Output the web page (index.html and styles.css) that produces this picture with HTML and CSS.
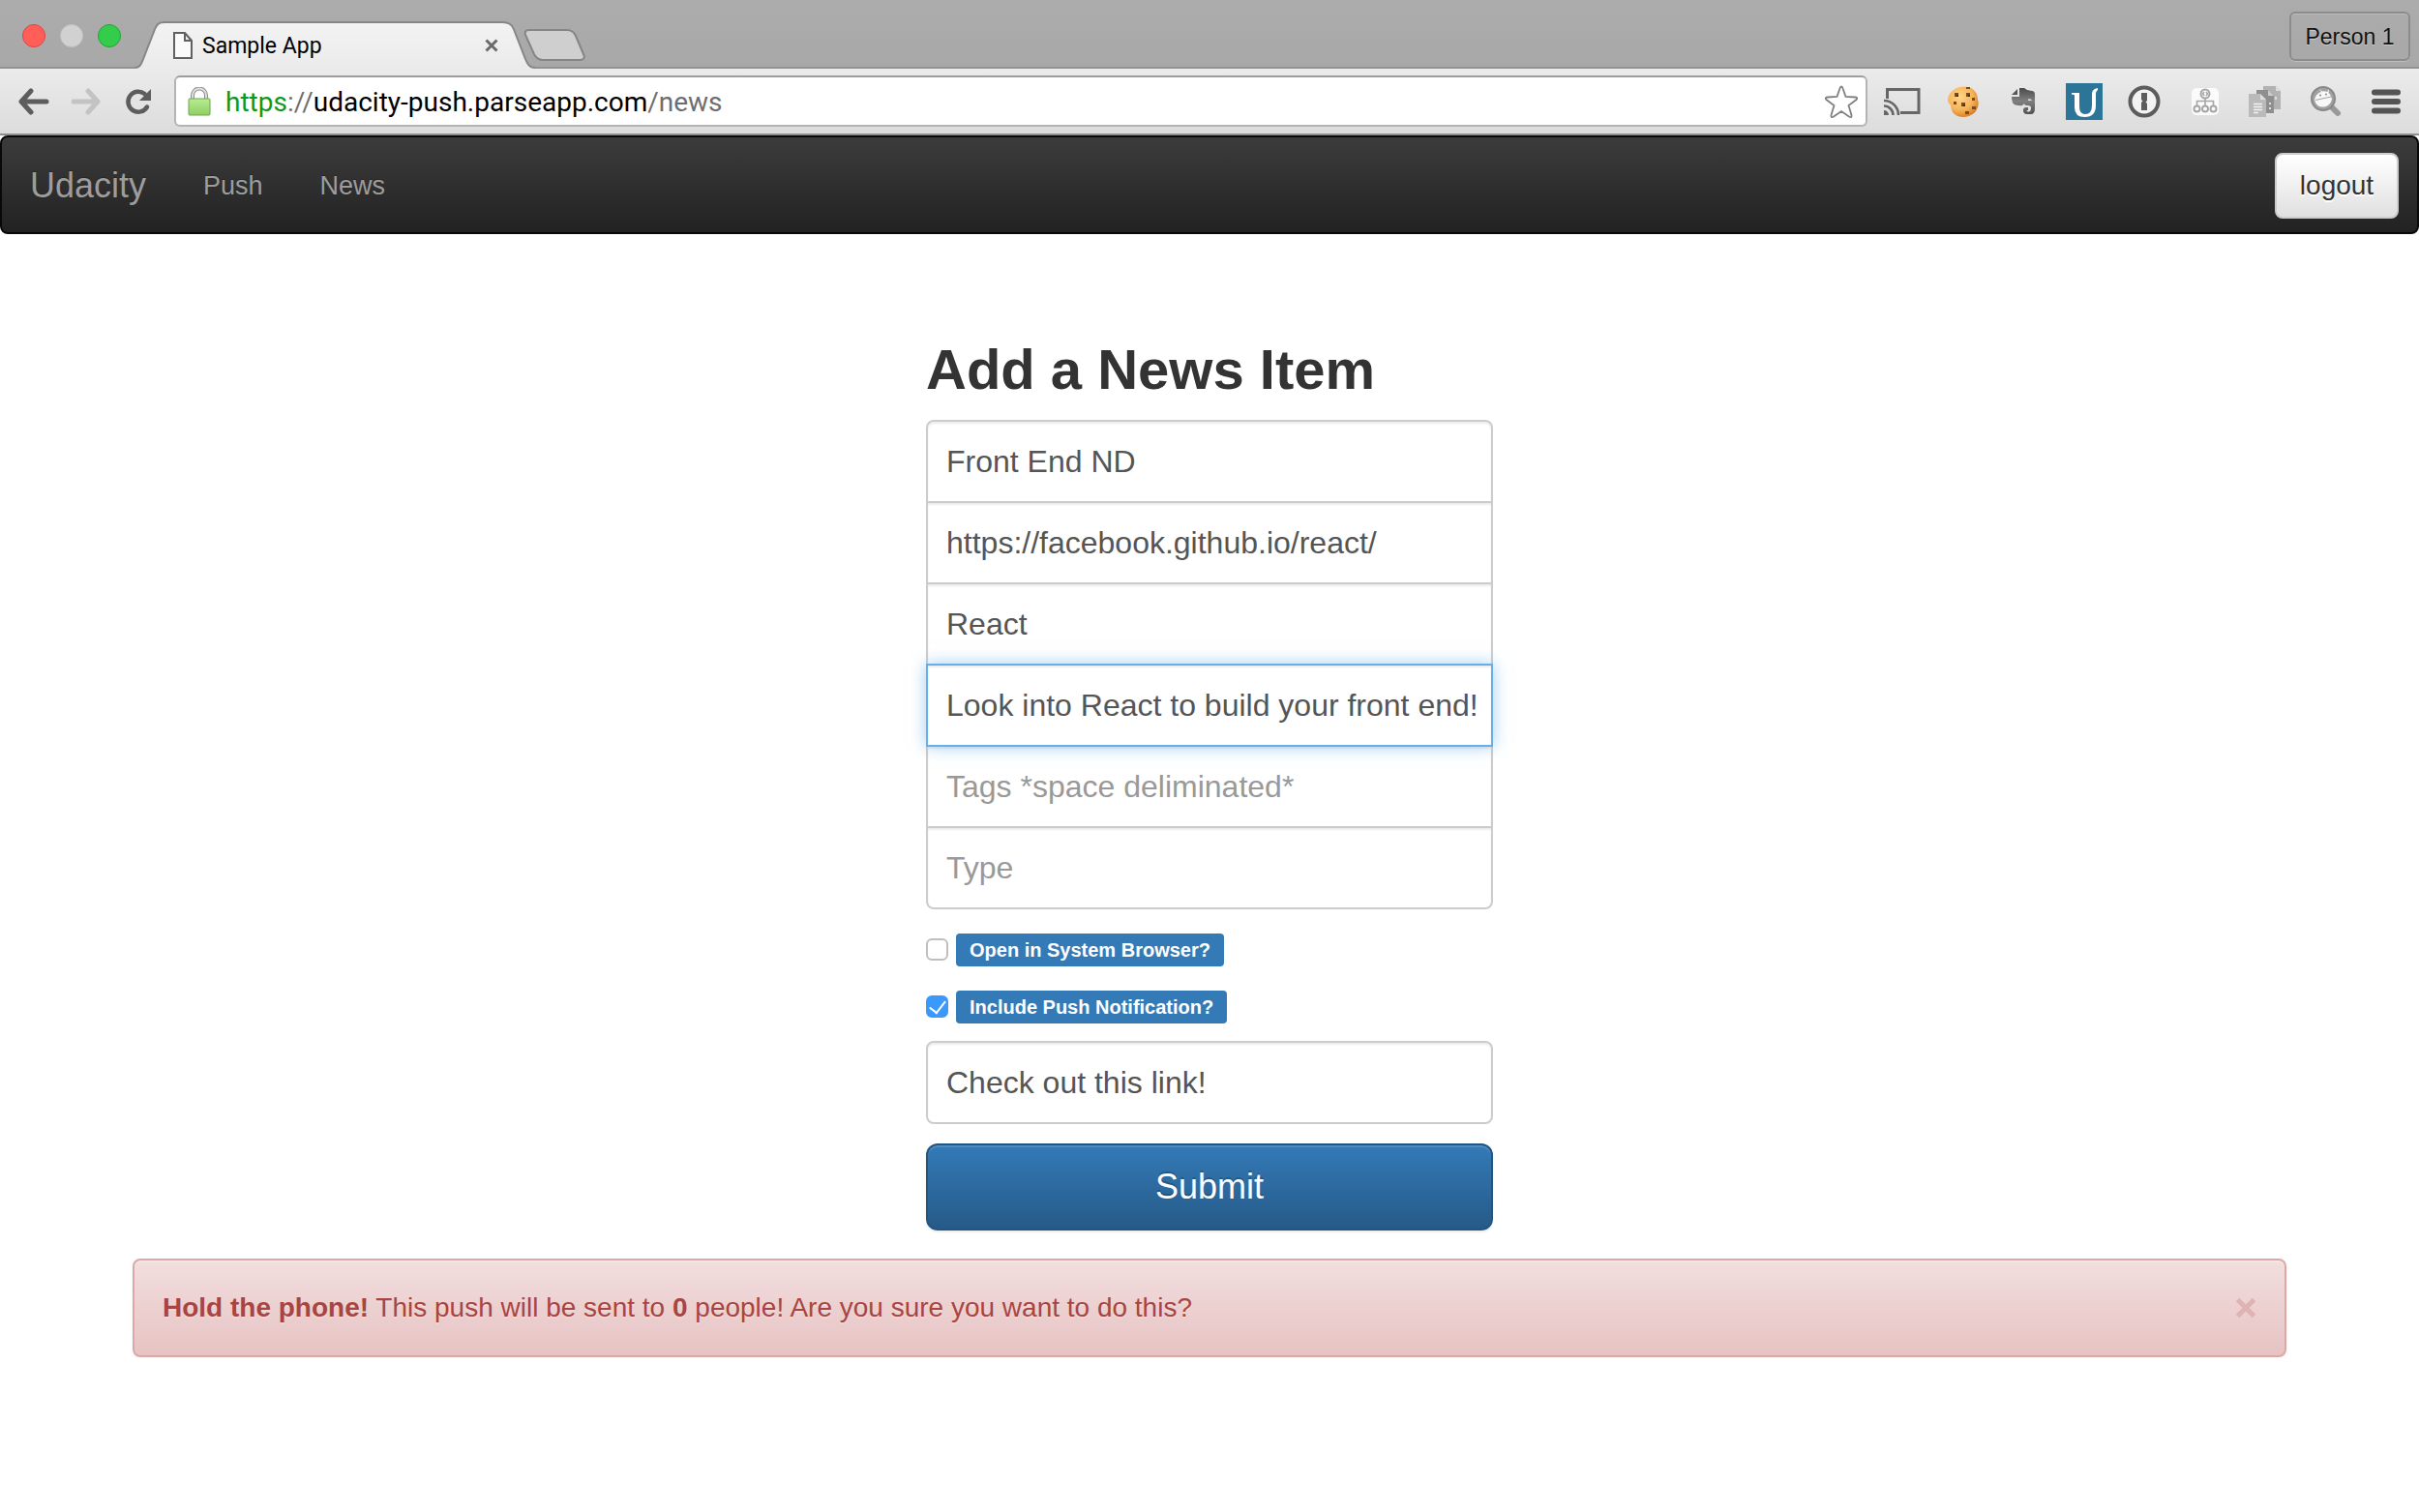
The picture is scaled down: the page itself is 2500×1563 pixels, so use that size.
FILE: index.html
```html
<!DOCTYPE html>
<html lang="en">
<head>
<meta charset="utf-8">
<title>Sample App</title>
<link rel="stylesheet" href="styles.css">
</head>
<body>
<header class="browser">
  <div class="tabstrip">
    <div class="lights">
      <span class="light light-close"></span>
      <span class="light light-min"></span>
      <span class="light light-max"></span>
    </div>
    <div class="tab">
      <svg class="tab-shape" viewBox="0 0 412 49" preserveAspectRatio="none" aria-hidden="true">
        <defs><linearGradient id="tabfill" x1="0" y1="0" x2="0" y2="1"><stop offset="0" stop-color="#f3f3f3"/><stop offset="1" stop-color="#ebebeb"/></linearGradient></defs>
        <path d="M0 48 C6 48 7 44 9 39 L21 8 C23 3 25 1 31 1 H379 C385 1 388 3 390 8 L402 39 C404 44 406 48 412 48 V49 H0Z" fill="url(#tabfill)"/>
        <path d="M0 48 C6 48 7 44 9 39 L21 8 C23 3 25 1 31 1 H379 C385 1 388 3 390 8 L402 39 C404 44 406 48 412 48" fill="none" stroke="#868686" stroke-width="2"/>
      </svg>
      <svg class="tab-file" viewBox="0 0 20 28" aria-hidden="true"><path d="M1 1H12L19 9V27H1Z M12 1V9H19" fill="#fafafa" stroke="#616161" stroke-width="2"/></svg>
      <span class="tab-title">Sample App</span>
      <button class="tab-close" aria-label="Close tab"><svg viewBox="0 0 14 14"><path d="M1.500 1.500L12.500 12.500M12.500 1.500L1.500 12.500" stroke="#6b6b6b" stroke-width="3"/></svg></button>
    </div>
    <button class="newtab" aria-label="New tab"><svg viewBox="0 0 64 33"><path d="M6 1H45C50 1 52 3 54 7L62 26C64 30 62 32 58 32H20C15 32 13 30 11 26L2 6C1 3 2 1 6 1Z" fill="#cfcfcf" stroke="#858585" stroke-width="2"/></svg></button>
    <button class="person">Person 1</button>
  </div>
  <div class="toolbar">
    <div class="history">
      <button class="icon" aria-label="Back"><svg width="32" height="28" viewBox="0 0 32 28"><path d="M29 14H4M13 3L3 14L13 25" fill="none" stroke="#5d5d5d" stroke-width="5" stroke-linecap="round" stroke-linejoin="round"/></svg></button>
      <button class="icon" aria-label="Forward"><svg width="32" height="28" viewBox="0 0 32 28"><path d="M2 14H27M17 3L27 14L17 25" fill="none" stroke="#c3c3c3" stroke-width="5" stroke-linecap="round" stroke-linejoin="round"/></svg></button>
      <button class="icon" aria-label="Reload"><svg width="28" height="28" viewBox="0 0 28 28"><path d="M23 19.500A10.500 10.500 0 1 1 20.500 6" fill="none" stroke="#5d5d5d" stroke-width="4.500" stroke-linecap="round"/><path d="M27 1V13H15Z" fill="#5d5d5d"/></svg></button>
    </div>
    <div class="omnibox">
      <svg width="24" height="30" viewBox="0 0 24 30" aria-hidden="true">
        <defs><linearGradient id="lock" x1="0" y1="0" x2="0" y2="1"><stop offset="0" stop-color="#b9ec92"/><stop offset="1" stop-color="#8fce66"/></linearGradient></defs>
        <path d="M5 13V8.500A7 7 0 0 1 19 8.500V13" fill="none" stroke="#8c8c8c" stroke-width="4"/><path d="M5 13V8.500A7 7 0 0 1 19 8.500V13" fill="none" stroke="#dedede" stroke-width="2"/>
        <rect x="1" y="12" width="22" height="17" rx="1" fill="url(#lock)" stroke="#6fa84d"/>
      </svg>
      <div class="url" role="textbox" contenteditable="true" spellcheck="false" aria-label="Address"><span class="url-scheme">https</span><span class="url-dim">://</span>udacity-push.parseapp.com<span class="url-dim">/news</span></div>
      <button class="icon" aria-label="Bookmark"><svg width="36" height="36" viewBox="0 0 36 36"><path d="M18 2.500Q19 2.500 19.600 4.500L22.500 13L32.500 13.500Q35.500 14 33.500 16L25.500 22L28.500 32Q29 35 26.300 33.700L18 28L9.700 33.700Q7 35 7.500 32L10.500 22L2.500 16Q.5 14 3.500 13.500L13.500 13L16.400 4.500Q17 2.500 18 2.500Z" fill="#fff" stroke="#808080" stroke-width="1.800"/></svg></button>
    </div>
    <div class="extensions">
      <button class="icon" aria-label="Cast"><svg width="38" height="30" viewBox="0 0 38 30"><path d="M3.500 12V2.500H36V26.500H17" fill="none" stroke="#666" stroke-width="3"/><path d="M0 24A5 5 0 0 1 5 29H0Z" fill="#666"/><path d="M0 19.500A9.500 9.500 0 0 1 9.500 29M0 14A15 15 0 0 1 15 29" fill="none" stroke="#666" stroke-width="2.600"/></svg></button>
      <button class="icon" aria-label="Cookies"><svg width="38" height="34" viewBox="0 0 38 34">
        <defs><radialGradient id="cookie" cx=".4" cy=".35" r=".7"><stop offset="0" stop-color="#ffd587"/><stop offset=".6" stop-color="#f6b45a"/><stop offset="1" stop-color="#d9791f"/></radialGradient></defs>
        <path d="M12 3Q19 0 27 3Q34 7 34 15Q36 21 32 27Q27 33 19 33Q12 33 8 28Q6 24 6 21Q1 17 4 11Q6 6 12 3Z" fill="url(#cookie)"/>
        <path d="M10 8h4v4h-4zM22 8h4v4h-4zM17 18h4v4h-4zM28 13h3v3h-3zM28 22h4v3h-4zM9 17h3v3h-3zM22 2h4v2h-4zM21 27h4v3h-4z" fill="#7a4a1f"/><path d="M12 10h2v2h-2zM24 10h2v2h-2zM19 20h2v2h-2z" fill="#4e2c12"/></svg></button>
      <button class="icon" aria-label="Notes"><svg width="38" height="30" viewBox="0 0 38 30">
        <defs><linearGradient id="elephant" x1="0" y1="0" x2="0" y2="1"><stop offset="0" stop-color="#4a4a4a"/><stop offset=".5" stop-color="#808080"/><stop offset="1" stop-color="#505050"/></linearGradient></defs>
        <path d="M7 8L13 2V8Z" fill="#555"/><path d="M15 1H20L23 3L28 4Q31 4 31 8V22Q31 28 27 28H23Q19 28 19 24Q19 21 22 21H24V24H22.500Q22.500 26 25 25.500Q27 25 27 21.500Q27 19 24 19Q20 19 20 17Q18 20 15 19Q9 19 8 16Q7 13 7 10H15Z" fill="url(#elephant)"/><path d="M24 12.500Q27 11.500 28 14H24Z" fill="#ddd"/></svg></button>
      <button class="icon" aria-label="Udacity"><svg width="38" height="38" viewBox="0 0 38 38"><rect width="38" height="38" fill="#2d7499"/><path d="M6 10H14V24Q14 32 20 32Q27 32 27 23V11Q27 6 33 5V7Q31 8 31 11V23Q31 35 19.500 35Q9 35 9 25V13Q9 11.500 6 11.500Z" fill="#fff"/></svg></button>
      <button class="icon" aria-label="Passwords"><svg width="38" height="34" viewBox="0 0 38 34"><circle cx="19" cy="17" r="14.500" fill="#f2f2f2" stroke="#5c5c5c" stroke-width="4"/><path d="M16 8H22V16L20.500 17.500L22 19V26H16V18L17.500 16.500L16 15Z" fill="#5c5c5c"/></svg></button>
      <button class="icon" aria-label="Site map"><svg width="38" height="30" viewBox="0 0 38 30"><rect x="5" y="1" width="28" height="28" rx="5" fill="#fbfbfb"/><g fill="none" stroke="#a6a6a6" stroke-width="2"><circle cx="19" cy="7" r="4.500"/><path d="M19 11.500V19M10.500 19V14.500H27.500V19M18 5L16.500 7L18 9M20 5L21.500 7L20 9" stroke-width="1.600"/><circle cx="10.500" cy="22.500" r="3"/><circle cx="19" cy="22.500" r="3"/><circle cx="27.500" cy="22.500" r="3"/></g></svg></button>
      <button class="icon" aria-label="Copy pages"><svg width="38" height="34" viewBox="0 0 38 34"><path d="M17 1H30L35 6V25H17Z" fill="#b2b2b2"/><path d="M30 1V6H35Z" fill="#ddd"/><path d="M10 5H22L28 11V29H10Z" fill="#8f8f8f"/><path d="M22 5V11H28Z" fill="#ccc"/><path d="M2 9H14L20 15V33H2Z" fill="#bababa"/><path d="M14 9V15H20Z" fill="#dedede"/><path d="M7 19.500H16M7 22.500H16M7 25.500H16M7 28.500H12" stroke="#f2f2f2" stroke-width="1.500"/><path d="M23 18H25V20H23ZM23 23H25V25H23ZM29 12H31V15H29Z" fill="#ddd"/></svg></button>
      <button class="icon" aria-label="Inspect"><svg width="38" height="34" viewBox="0 0 38 34"><path d="M25 23L31 29" stroke="#999" stroke-width="6" stroke-linecap="round"/><circle cx="16" cy="14" r="12" fill="#a2a2a2" stroke="#888" stroke-width="2"/><path d="M7 15L8 12Q10 8 14 7L12 4L15 6.500Q18 6 20 7L22 4L21.500 8Q24 10 24 12L25 14Q24 20 19 22Q11 24 8 18Z" fill="#f8f8f8"/><path d="M8 15.500L24 12" stroke="#a2a2a2"/><circle cx="13" cy="10.500" r="1" fill="#888"/><circle cx="19" cy="9.500" r="1" fill="#888"/></svg></button>
      <button class="icon" aria-label="Menu"><svg width="38" height="28" viewBox="0 0 38 28"><path d="M7 4.500H31M7 14H31M7 23.500H31" stroke="#545454" stroke-width="6" stroke-linecap="round"/></svg></button>
    </div>
  </div>
</header>

<nav class="navbar">
  <a class="brand" href="#">Udacity</a>
  <a class="navlink" href="#">Push</a>
  <a class="navlink" href="#">News</a>
  <button class="logout">logout</button>
</nav>

<main class="page">
  <form class="news-form">
    <h2 class="heading">Add a News Item</h2>
    <div class="stack">
      <input class="field" type="text" aria-label="Title" value="Front End ND">
      <input class="field" type="text" aria-label="URL" value="https://facebook.github.io/react/">
      <input class="field" type="text" aria-label="Topic" value="React">
      <input class="field field-active" type="text" aria-label="Description" value="Look into React to build your front end!">
      <input class="field" type="text" aria-label="Tags" placeholder="Tags *space deliminated*">
      <input class="field" type="text" aria-label="Type" placeholder="Type">
    </div>
    <div class="check-row"><input class="check" type="checkbox" id="system"><label class="badge" for="system">Open in System Browser?</label></div>
    <div class="check-row"><input class="check" type="checkbox" id="push" checked><label class="badge" for="push">Include Push Notification?</label></div>
    <input class="field message" type="text" aria-label="Push message" value="Check out this link!">
    <button class="submit" type="button">Submit</button>
  </form>
  <div class="alert" role="alert">
    <p class="alert-text"><strong>Hold the phone!</strong> This push will be sent to <strong>0</strong> people! Are you sure you want to do this?</p>
    <button class="alert-close" aria-label="Close"><svg width="22" height="22" viewBox="0 0 22 22"><path d="M2.500 2.500L19.500 19.500M19.500 2.500L2.500 19.500" stroke="#dfb3b3" stroke-width="5"/></svg></button>
  </div>
</main>
</body>
</html>
```
FILE: styles.css
```css
* { box-sizing: border-box; }

body {
  margin: 0;
  background: #fff;
  color: #333;
  font-family: "Liberation Sans", Arial, sans-serif;
  font-size: 27px;
}

button {
  margin: 0;
  padding: 0;
  border: 0;
  background: none;
  font-family: inherit;
}

svg { display: block; }

/* Browser window */
.browser { font-family: Roboto, sans-serif; }

.tabstrip {
  display: flex;
  align-items: flex-end;
  height: 71px;
  padding-right: 9px;
  background: linear-gradient(#acacac, #a8a8a8);
  box-shadow: inset 0 -2px #929292;
}

.lights {
  display: flex;
  align-items: center;
  align-self: flex-start;
  gap: 15px;
  width: 139px;
  padding: 25px 0 0 23px;
}

.light {
  width: 24px;
  height: 24px;
  border: 1px solid #e0443e;
  border-radius: 50%;
  background: #ff5f58;
}
.light-min { border-color: #c2c2c2; background: #d1d1d1; }
.light-max { border-color: #1fa632; background: #33cc4b; }

.tab {
  position: relative;
  display: flex;
  align-items: center;
  width: 414px;
  height: 49px;
  padding: 0 38px 0 40px;
}
.tab-shape {
  position: absolute;
  inset: 0;
  width: 100%;
  height: 100%;
}
.tab-file { position: relative; width: 20px; height: 28px; }
.tab-title {
  position: relative;
  flex: 1;
  padding: 2px 0 0 10px;
  color: #000;
  font-size: 23px;
}
.tab-close { position: relative; width: 14px; height: 14px; }

.newtab { width: 64px; height: 33px; margin: 0 auto 8px -12px; }
.newtab svg { width: 64px; height: 33px; }

.person {
  align-self: flex-start;
  width: 125px;
  height: 51px;
  margin-top: 12px;
  padding-top: 2px;
  border: 2px solid #8c8c8c;
  border-radius: 6px;
  box-shadow: 0 1px #bdbdbd, inset 0 1px #bdbdbd;
  color: #111;
  font-family: "Liberation Sans", Arial, sans-serif;
  font-size: 23px;
  text-shadow: 0 1px #ccc;
}

.toolbar {
  display: flex;
  align-items: center;
  height: 69px;
  padding: 0 15px 0 19px;
  border-bottom: 2px solid #8e8e8e;
  background: linear-gradient(#ebebeb, #dcdcdc);
}

.history {
  display: flex;
  gap: 23px;
  width: 161px;
}

.icon { flex: none; }

.omnibox {
  display: flex;
  flex: 1;
  align-items: center;
  height: 53px;
  padding: 0 7px 0 12px;
  border: 2px solid #b4b4b4;
  border-top-color: #9d9d9d;
  border-radius: 6px;
  background: #fff;
}

.url {
  flex: 1;
  padding: 2px 0 0 15px;
  color: #000;
  font-size: 28px;
  line-height: 36px;
  outline: 0;
}
.url-scheme { color: #0b9b1c; }
.url-dim { color: #6e6e6e; }

.extensions {
  display: flex;
  align-items: center;
  justify-content: space-between;
  width: 538px;
  margin-left: 17px;
}

/* Page */
.navbar {
  display: flex;
  align-items: center;
  height: 102px;
  padding: 2px 19px 0 29px;
  border: 2px solid #080808;
  border-radius: 8px;
  background: linear-gradient(#3c3c3c, #222);
}

.brand,
.navlink {
  color: #9d9d9d;
  text-decoration: none;
  text-shadow: 0 -1px rgba(0, 0, 0, .25);
}
.brand { width: 179px; font-size: 36px; }
.navlink { margin-right: 59px; }

.logout {
  width: 128px;
  height: 68px;
  margin-left: auto;
  border: 2px solid #ccc;
  border-radius: 8px;
  background: linear-gradient(#fff, #e0e0e0);
  color: #333;
  font-size: 28px;
  text-shadow: 0 2px #fff;
}

.page { padding: 108px 137px 0; }

.news-form {
  display: flex;
  flex-direction: column;
  width: 586px;
  margin: 0 auto;
}

.heading {
  margin: 0 0 20px;
  font-size: 58px;
  font-weight: bold;
  line-height: 64px;
}

.stack { display: flex; flex-direction: column; }

.field {
  width: 100%;
  height: 86px;
  padding: 0 12px 0 19px;
  border: 2px solid #ccc;
  background: #fff;
  box-shadow: inset 0 2px 2px rgba(0, 0, 0, .075);
  color: #555;
  font-family: inherit;
  font-size: 32px;
  outline: 0;
}
.field::placeholder { color: #999; opacity: 1; }
.field + .field { margin-top: -2px; }
.stack .field:first-child { border-radius: 8px 8px 0 0; }
.stack .field:last-child { border-radius: 0 0 8px 8px; }

.field-active {
  position: relative;
  z-index: 1;
  border-color: #66afe9;
  box-shadow: inset 0 2px 2px rgba(0, 0, 0, .075), 0 0 16px rgba(102, 175, 233, .6);
}

.check-row {
  display: flex;
  align-items: center;
  gap: 8px;
  margin-top: 25px;
}

.check {
  display: grid;
  place-items: center;
  width: 23px;
  height: 23px;
  margin: 0 0 2px;
  border: 2px solid #bfbfbf;
  border-radius: 6px;
  background: #fff;
  appearance: none;
}
.check:checked { border-color: #3b99fc; background: #3b99fc; }
.check:checked::after {
  content: "";
  width: 8px;
  height: 14px;
  margin-bottom: 3px;
  border: solid #fff;
  border-width: 0 2px 2px 0;
  transform: rotate(38deg);
}

.badge {
  padding: 0 14px;
  border-radius: 4px;
  background: #337ab7;
  color: #fff;
  font-size: 20px;
  font-weight: bold;
  line-height: 34px;
}

.message { margin-top: 18px; border-radius: 8px; }

.submit {
  height: 90px;
  margin-top: 20px;
  border: 2px solid #245580;
  border-radius: 12px;
  background: linear-gradient(#337ab7, #265a88);
  box-shadow: inset 0 2px rgba(255, 255, 255, .15), 0 2px 2px rgba(0, 0, 0, .075);
  color: #fff;
  font-size: 36px;
  text-shadow: 0 -2px rgba(0, 0, 0, .2);
}

.alert {
  display: flex;
  align-items: center;
  justify-content: space-between;
  height: 102px;
  margin-top: 29px;
  padding: 0 29px;
  border: 2px solid #dca7a7;
  border-radius: 8px;
  background: linear-gradient(#f2dede, #e7c3c3);
  box-shadow: inset 0 2px rgba(255, 255, 255, .25), 0 2px 4px rgba(0, 0, 0, .05);
  color: #a94442;
  font-size: 28px;
  text-shadow: 0 2px rgba(255, 255, 255, .2);
}
.alert-text { margin: 0; }
```
